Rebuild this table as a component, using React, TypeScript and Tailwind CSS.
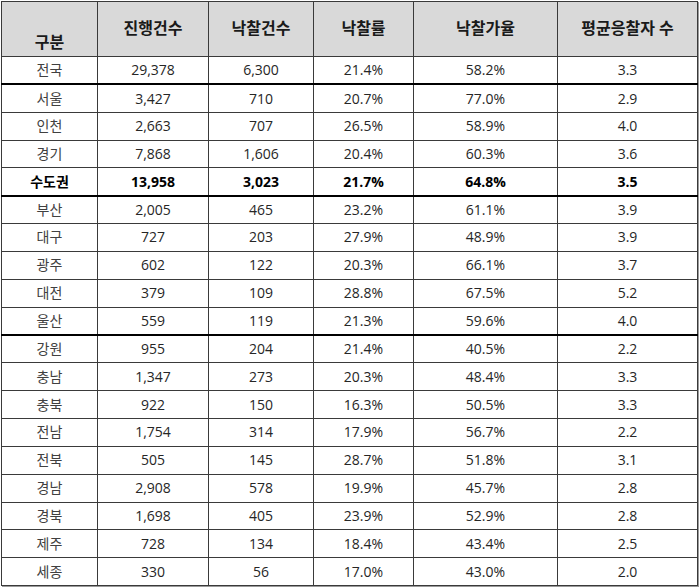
const header = ['구분', '진행건수', '낙찰건수', '낙찰률', '낙찰가율', '평균응찰자 수'];

const rows: { name: string; v: string[]; bold?: boolean; thick?: boolean }[] = [
  { name: '전국', v: ['29,378', '6,300', '21.4%', '58.2%', '3.3'], thick: true },
  { name: '서울', v: ['3,427', '710', '20.7%', '77.0%', '2.9'] },
  { name: '인천', v: ['2,663', '707', '26.5%', '58.9%', '4.0'] },
  { name: '경기', v: ['7,868', '1,606', '20.4%', '60.3%', '3.6'] },
  { name: '수도권', v: ['13,958', '3,023', '21.7%', '64.8%', '3.5'], bold: true, thick: true },
  { name: '부산', v: ['2,005', '465', '23.2%', '61.1%', '3.9'] },
  { name: '대구', v: ['727', '203', '27.9%', '48.9%', '3.9'] },
  { name: '광주', v: ['602', '122', '20.3%', '66.1%', '3.7'] },
  { name: '대전', v: ['379', '109', '28.8%', '67.5%', '5.2'] },
  { name: '울산', v: ['559', '119', '21.3%', '59.6%', '4.0'], thick: true },
  { name: '강원', v: ['955', '204', '21.4%', '40.5%', '2.2'] },
  { name: '충남', v: ['1,347', '273', '20.3%', '48.4%', '3.3'] },
  { name: '충북', v: ['922', '150', '16.3%', '50.5%', '3.3'] },
  { name: '전남', v: ['1,754', '314', '17.9%', '56.7%', '2.2'] },
  { name: '전북', v: ['505', '145', '28.7%', '51.8%', '3.1'] },
  { name: '경남', v: ['2,908', '578', '19.9%', '45.7%', '2.8'] },
  { name: '경북', v: ['1,698', '405', '23.9%', '52.9%', '2.8'] },
  { name: '제주', v: ['728', '134', '18.4%', '43.4%', '2.5'] },
  { name: '세종', v: ['330', '56', '17.0%', '43.0%', '2.0'] },
];

const widths = ['w-[96px]', 'w-[111px]', 'w-[105px]', 'w-[100px]', 'w-[144px]', 'w-[140px]'];

export default function App() {
  return (
    <div className="w-[700px] h-[587px] bg-white pl-[1px] pt-[1px] font-['Open_Sans','Noto_Sans_CJK_KR',sans-serif] text-[#262626]">
      <table className="w-[697px] border-collapse table-fixed border border-[#3a3a3a] shadow-[1px_1px_0_#9a9a9a]">
        <colgroup>
          {widths.map((w, i) => (
            <col key={i} className={w} />
          ))}
        </colgroup>
        <thead>
          <tr className="h-[55px] bg-[#d9d9d9]">
            {header.map((h, i) => (
              <th
                key={h}
                className={
                  'border border-[#3a3a3a] text-[16px] font-bold text-[#1a1a1a] text-center ' +
                  (i === 0 ? 'align-bottom pb-[2px]' : 'align-middle pb-[2px]')
                }
              >
                {h}
              </th>
            ))}
          </tr>
        </thead>
        <tbody>
          {rows.map((r) => (
            <tr
              key={r.name}
              className={
                'h-[27.85px] ' +
                (r.thick ? 'border-b-2 border-b-black' : 'border-b border-b-[#3a3a3a]')
              }
            >
              <td
                className={
                  'border-x border-[#3a3a3a] text-center text-[14px] leading-none ' +
                  (r.bold ? 'font-bold text-black' : 'text-[#404040]')
                }
              >
                {r.name}
              </td>
              {r.v.map((x, i) => (
                <td
                  key={i}
                  className={
                    'border-x border-[#3a3a3a] text-center text-[14px] leading-none ' +
                    (r.bold ? 'font-bold text-black' : '')
                  }
                >
                  {x}
                </td>
              ))}
            </tr>
          ))}
        </tbody>
      </table>
    </div>
  );
}
